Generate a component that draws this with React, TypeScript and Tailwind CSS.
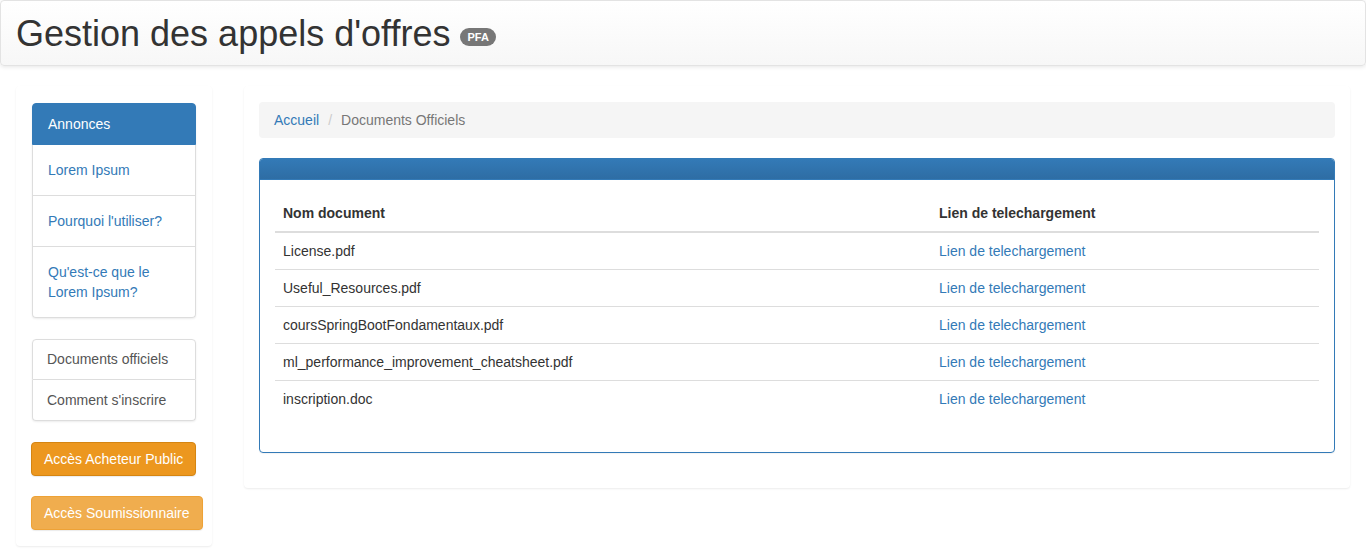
import React from 'react';

const documents = [
  'License.pdf',
  'Useful_Resources.pdf',
  'coursSpringBootFondamentaux.pdf',
  'ml_performance_improvement_cheatsheet.pdf',
  'inscription.doc',
];

export default function App() {
  return (
    <div className="min-h-screen bg-white text-[14px] leading-[20px] text-[#333] font-['Liberation_Sans',Arial,sans-serif]">
      {/* Header */}
      <div className="h-[66px] border border-[#e3e3e3] rounded-[4px] bg-gradient-to-b from-white to-[#f7f7f7] shadow-[0_1px_4px_rgba(0,0,0,0.1)] pl-[15px] pt-[13px] flex items-start">
        <h1 className="text-[36px] leading-[40px] font-normal text-[#333] flex items-center">
          Gestion des appels d'offres
          <span className="ml-[10px] mt-[6px] inline-flex items-center h-[18px] px-[7px] rounded-full bg-[#777] text-white text-[11px] font-bold leading-none">
            PFA
          </span>
        </h1>
      </div>

      <div className="flex mt-[20px] pl-[16px] pr-[16px] gap-[32px] items-start">
        {/* Sidebar */}
        <div className="w-[196px] shrink-0 rounded-[4px] bg-white shadow-[0_1px_2px_rgba(0,0,0,0.08)] pl-[15px] pr-[16px] pt-[17px] pb-[16px]">
          <div className="ml-[1px] w-[164px] rounded-[4px] shadow-[0_1px_2px_rgba(0,0,0,0.075)] mb-[21px]">
            <div className="bg-[#337ab7] border border-[#337ab7] rounded-t-[4px] text-white px-[15px] pt-[10px] pb-[10px]">Annonces</div>
            <div className="border-x border-b border-[#ddd] px-[15px] py-[15px] text-[#337ab7]">Lorem Ipsum</div>
            <div className="border-x border-b border-[#ddd] px-[15px] py-[15px] text-[#337ab7]">Pourquoi l'utiliser?</div>
            <div className="border-x border-b border-[#ddd] rounded-b-[4px] px-[15px] py-[15px] text-[#337ab7]">
              Qu'est-ce que le
              <br />
              Lorem Ipsum?
            </div>
          </div>

          <div className="ml-[1px] w-[164px] rounded-[4px] shadow-[0_1px_2px_rgba(0,0,0,0.075)] mb-[21px]">
            <div className="border border-[#ddd] rounded-t-[4px] px-[14px] pt-[9px] pb-[10px] text-[#555]">Documents officiels</div>
            <div className="border-x border-b border-[#ddd] rounded-b-[4px] px-[14px] py-[10px] text-[#555]">Comment s'inscrire</div>
          </div>

          <div className="flex flex-col items-start gap-[20px]">
            <button className="h-[34px] px-[12px] whitespace-nowrap border border-[#d58512] bg-[#ec971f] text-white rounded-[4px] shadow-[0_1px_1px_rgba(0,0,0,0.08)]">
              Accès Acheteur Public
            </button>
            <button className="h-[34px] px-[12px] whitespace-nowrap border border-[#eea236] bg-[#f0ad4e] text-white rounded-[4px] shadow-[0_1px_1px_rgba(0,0,0,0.08)]">
              Accès Soumissionnaire
            </button>
          </div>
        </div>

        {/* Main content */}
        <div className="flex-1 rounded-[4px] bg-white shadow-[0_1px_2px_rgba(0,0,0,0.08)] px-[15px] pt-[16px] pb-[15px]">
          <div className="h-[36px] bg-[#f5f5f5] rounded-[4px] px-[15px] flex items-center mb-[20px]">
            <span className="text-[#337ab7]">Accueil</span>
            <span className="text-[#ccc] px-[9px]">/</span>
            <span className="text-[#777]">Documents Officiels</span>
          </div>

          <div className="border border-[#337ab7] rounded-[4px] mb-[20px] shadow-[0_1px_1px_rgba(0,0,0,0.05)]">
            <div className="h-[21px] bg-gradient-to-b from-[#337ab7] to-[#2e6da4] border-b border-[#337ab7] rounded-t-[3px]" />
            <div className="p-[15px]">
              <table className="w-full border-collapse mb-[20px]">
                <thead>
                  <tr>
                    <th className="w-[656px] text-left font-bold px-[8px] pt-[8px] pb-[8px] border-b-2 border-[#ddd]">Nom document</th>
                    <th className="text-left font-bold px-[8px] pt-[8px] pb-[8px] border-b-2 border-[#ddd]">Lien de telechargement</th>
                  </tr>
                </thead>
                <tbody>
                  {documents.map((doc, i) => (
                    <tr key={doc}>
                      <td className={`px-[8px] py-[8px] ${i === 0 ? '' : 'border-t border-[#ddd]'}`}>{doc}</td>
                      <td className={`px-[8px] py-[8px] text-[#337ab7] ${i === 0 ? '' : 'border-t border-[#ddd]'}`}>Lien de telechargement</td>
                    </tr>
                  ))}
                </tbody>
              </table>
            </div>
          </div>
        </div>
      </div>
    </div>
  );
}
